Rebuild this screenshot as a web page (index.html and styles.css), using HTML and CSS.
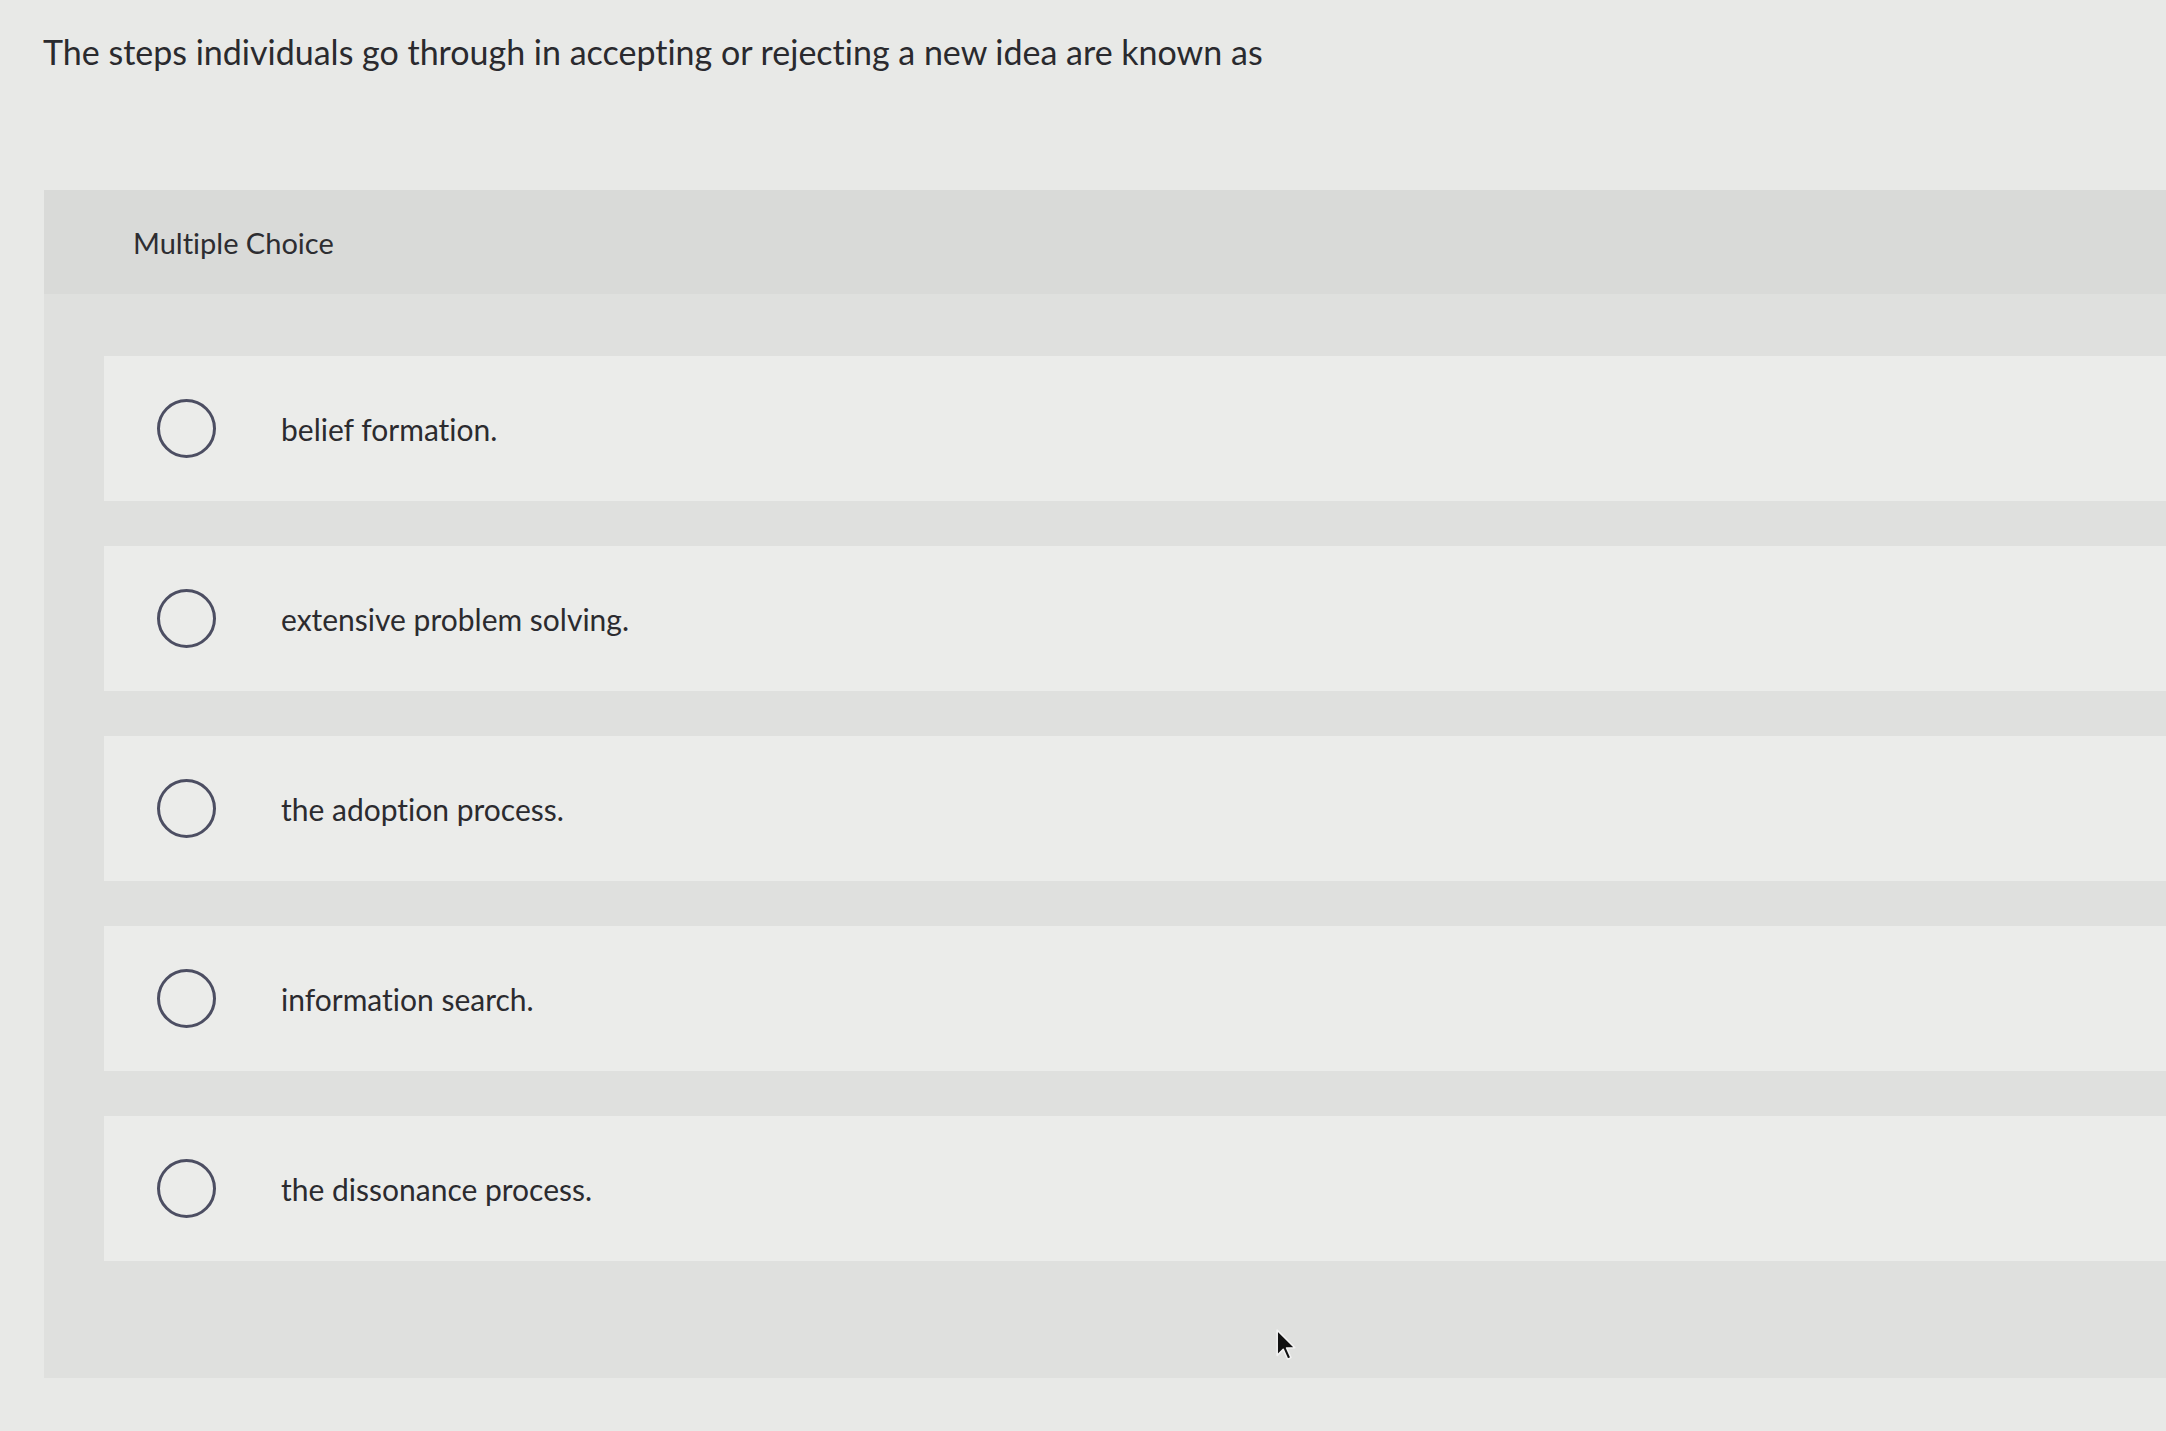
FILE: index.html
```html
<!DOCTYPE html>
<html lang="en">
<head>
<meta charset="utf-8">
<title>Multiple Choice</title>
<link rel="stylesheet" href="styles.css">
</head>
<body>
<main class="page">
  <p class="question"><span>The steps individuals go through in accepting or rejecting a new idea are known as</span></p>
  <section class="panel">
    <header class="panel-head">Multiple Choice</header>
    <div class="options">
      <label class="option"><span class="radio"></span><span class="label">belief formation.</span></label>
      <label class="option"><span class="radio"></span><span class="label">extensive problem solving.</span></label>
      <label class="option"><span class="radio"></span><span class="label">the adoption process.</span></label>
      <label class="option"><span class="radio"></span><span class="label">information search.</span></label>
      <label class="option"><span class="radio"></span><span class="label">the dissonance process.</span></label>
    </div>
  </section>
  <svg class="cursor" width="22" height="33" viewBox="0 0 20 30" aria-hidden="true">
    <path d="M2 1 L2 24 L7.5 18.5 L11.5 27.5 L14.5 26 L10.5 17.2 L18 17 Z" fill="#111" stroke="#f2f2f2" stroke-width="1.4" stroke-linejoin="round"/>
  </svg>
</main>
</body>
</html>
```

FILE: styles.css
```css
html, body {
  margin: 0;
  padding: 0;
}

body {
  background: #e8e9e7;
  font-family: Lato, "Open Sans", "Liberation Sans", sans-serif;
  font-variant-ligatures: none;
  color: #2b2b2f;
  width: 2166px;
  height: 1431px;
  overflow: hidden;
}

.page {
  position: relative;
  height: 1431px;
  display: flex;
  flex-direction: column;
}

.question {
  margin: 0;
  padding: 30px 0 0 43px;
  font-size: 34px;
  line-height: 44px;
  height: 190px;
  box-sizing: border-box;
  color: #2a2a2e;
}

.panel {
  margin-left: 44px;
  background: #dfe0de;
  display: flex;
  flex-direction: column;
  padding-bottom: 117px;
}

.panel-head {
  height: 104px;
  background: #d9dad8;
  display: flex;
  align-items: center;
  padding-left: 89px;
  font-size: 29px;
  color: #2d2d31;
}

.options {
  display: flex;
  flex-direction: column;
  gap: 45px;
  padding-top: 62px;
  padding-left: 60px;
}

.option {
  height: 145px;
  background: #ebecea;
  display: flex;
  align-items: center;
  padding-left: 53px;
}

.radio {
  width: 59px;
  height: 59px;
  box-sizing: border-box;
  border: 3px solid #4c4e62;
  border-radius: 50%;
  flex: none;
}

.label {
  margin-left: 65px;
  font-size: 30px;
  color: #2b2b2f;
}

.cursor {
  position: absolute;
  left: 1275px;
  top: 1329px;
}
```
